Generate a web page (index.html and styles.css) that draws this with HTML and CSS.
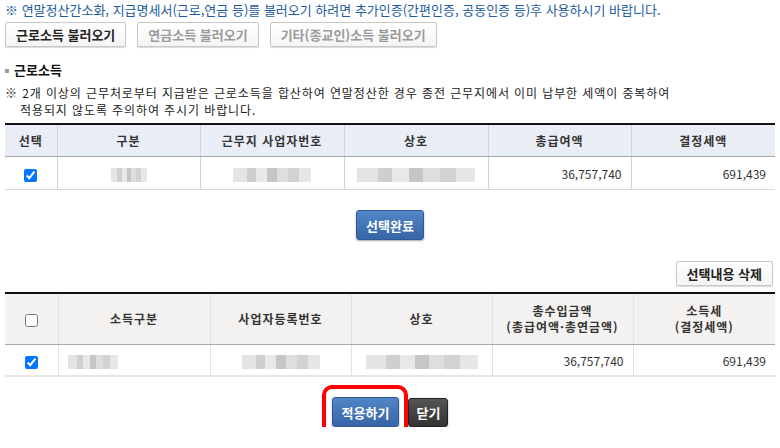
FILE: index.html
```html
<!DOCTYPE html>
<html lang="ko">
<head>
    <meta charset="UTF-8">
    <title>근로소득 불러오기</title>
    <link rel="stylesheet" href="styles.css">
</head>
<body>
    <div class="wrap">
        <p class="info">※ 연말정산간소화, 지급명세서(근로,연금 등)를 불러오기 하려면 추가인증(간편인증, 공동인증 등)후 사용하시기 바랍니다.</p>

        <div class="load-btns">
            <button class="btn-white on">근로소득 불러오기</button>
            <button class="btn-white">연금소득 불러오기</button>
            <button class="btn-white">기타(종교인)소득 불러오기</button>
        </div>

        <h3 class="tit">근로소득</h3>
        <p class="note">※ 2개 이상의 근무처로부터 지급받은 근로소득을 합산하여 연말정산한 경우 종전 근무지에서 이미 납부한 세액이 중복하여<br>적용되지 않도록 주의하여 주시기 바랍니다.</p>

        <table class="tbl tbl-blue">
            <colgroup>
                <col style="width:52px"><col style="width:143px"><col style="width:144px">
                <col style="width:144px"><col style="width:143px"><col>
            </colgroup>
            <thead>
                <tr>
                    <th>선택</th><th>구분</th><th>근무지 사업자번호</th><th>상호</th><th>총급여액</th><th>결정세액</th>
                </tr>
            </thead>
            <tbody>
                <tr>
                    <td class="c"><input type="checkbox" checked></td>
                    <td class="c"><span class="mask w36"></span></td>
                    <td class="c"><span class="mask w78"></span></td>
                    <td class="c"><span class="mask w118"></span></td>
                    <td class="r">36,757,740</td>
                    <td class="r">691,439</td>
                </tr>
            </tbody>
        </table>

        <div class="center-btns first">
            <button class="btn-blue">선택완료</button>
        </div>

        <div class="right-btns">
            <button class="btn-white on">선택내용 삭제</button>
        </div>

        <table class="tbl tbl-gray">
            <colgroup>
                <col style="width:53px"><col style="width:152px"><col style="width:141px">
                <col style="width:141px"><col style="width:141px"><col>
            </colgroup>
            <thead>
                <tr>
                    <th><input type="checkbox"></th><th>소득구분</th><th>사업자등록번호</th><th>상호</th>
                    <th>총수입금액<br>(총급여액·총연금액)</th><th>소득세<br>(결정세액)</th>
                </tr>
            </thead>
            <tbody>
                <tr>
                    <td class="c"><input type="checkbox" checked></td>
                    <td><span class="mask w50"></span></td>
                    <td class="c"><span class="mask w78"></span></td>
                    <td class="c"><span class="mask w112"></span></td>
                    <td class="r">36,757,740</td>
                    <td class="r">691,439</td>
                </tr>
            </tbody>
        </table>

        <div class="center-btns last">
            <span class="focus-box">
                <button class="btn-blue">적용하기</button>
            </span>
            <button class="btn-dark">닫기</button>
        </div>
    </div>
</body>
</html>
```

FILE: styles.css
```css
body {
    margin: 0;
    font-family: "Noto Sans CJK KR", "Noto Sans", sans-serif;
    font-size: 13px;
    color: #222;
    background-color: #fff;
}
.wrap {
    padding: 0 5px;
}
.info {
    margin: 0;
    padding-top: 1px;
    line-height: 18px;
    color: #1c5c9c;
}
.load-btns {
    display: flex;
    gap: 11px;
    margin-top: 3px;
}
button {
    font-family: inherit;
    cursor: pointer;
}
.btn-white {
    height: 25px;
    padding: 0 10px;
    border: 1px solid #c8c8c8;
    border-radius: 2px;
    background: linear-gradient(#fff, #f4f4f4);
    box-shadow: 0 1px 1px rgba(0, 0, 0, 0.15);
    font-size: 13px;
    font-weight: bold;
    color: #9a9a9a;
}
.btn-white.on {
    color: #222;
}
.tit {
    margin: 14px 0 0;
    padding-left: 9px;
    position: relative;
    font-size: 13px;
    line-height: 18px;
    color: #111;
}
.tit::before {
    content: "";
    position: absolute;
    left: 0;
    top: 8px;
    width: 4px;
    height: 4px;
    background-color: #999;
}
.note {
    margin: 5px 0 0;
    padding-left: 15px;
    text-indent: -15px;
    font-size: 12px;
    letter-spacing: 0.9px;
    line-height: 17px;
    color: #222;
}
.tbl {
    width: 100%;
    border-collapse: collapse;
    table-layout: fixed;
    border-top: 2px solid #111;
}
.tbl-blue {
    margin-top: 5px;
}
.tbl th {
    font-size: 12px;
    letter-spacing: 1px;
    font-weight: bold;
    color: #333;
    border-left: 1px solid #cfd4dd;
    border-bottom: 1px solid #a8a8a8;
    line-height: 16px;
}
.tbl th:first-child,
.tbl td:first-child {
    border-left: none;
}
.tbl-blue th {
    height: 29px;
    background-color: #e9edf5;
}
.tbl-blue td {
    height: 32px;
    border-left: 1px solid #cfd4dd;
    border-bottom: 1px solid #d4d7dc;
}
.tbl-gray th {
    height: 48px;
    background-color: #f3f2f0;
    border-left-color: #e2e2e2;
}
.tbl-gray td {
    height: 30px;
    border-left: 1px solid #e2e2e2;
    border-bottom: 2px solid #e6e6e6;
}
.tbl td {
    padding: 0 9px;
    font-size: 12px;
    color: #333;
}
.tbl td.c {
    text-align: center;
}
.tbl td.r {
    text-align: right;
}
.tbl input[type="checkbox"] {
    width: 13px;
    height: 13px;
    margin: 0;
    vertical-align: middle;
}
.mask {
    display: inline-block;
    height: 14px;
    vertical-align: middle;
    background:
        linear-gradient(90deg, #e4e4e4 0 18%, #cfcfcf 18% 30%, #e8e8e8 30% 44%, #c6c6c6 44% 56%, #dedede 56% 70%, #d2d2d2 70% 84%, #e6e6e6 84% 100%);
    filter: blur(0.6px);
}
.w36 { width: 36px; }
.w50 { width: 50px; }
.w78 { width: 78px; }
.w112 { width: 112px; }
.w118 { width: 118px; }
.center-btns {
    display: flex;
    justify-content: center;
    align-items: center;
    gap: 9px;
}
.center-btns.first {
    margin-top: 20px;
}
.center-btns.last {
    margin-top: 20px;
}
.right-btns {
    display: flex;
    justify-content: flex-end;
    margin-top: 21px;
    margin-bottom: 6px;
    padding-right: 2px;
}
.btn-blue,
.btn-dark {
    height: 30px;
    padding: 0 9px;
    border: 1px solid #2d5a94;
    border-radius: 3px;
    font-size: 13px;
    font-weight: bold;
    color: #fff;
    box-shadow: 0 1px 2px rgba(0, 0, 0, 0.35);
}
.btn-blue {
    background: linear-gradient(#5286c6, #3765a6);
}
.btn-dark {
    height: 29px;
    padding: 0 7px;
    border-color: #222;
    background: linear-gradient(#555, #333);
}
.focus-box {
    position: relative;
    display: inline-block;
    line-height: 0;
}
.focus-box::after {
    content: "";
    position: absolute;
    left: -10px;
    right: -9px;
    top: -12px;
    bottom: -15px;
    border: 4px solid #f00;
    border-radius: 10px;
}
```
